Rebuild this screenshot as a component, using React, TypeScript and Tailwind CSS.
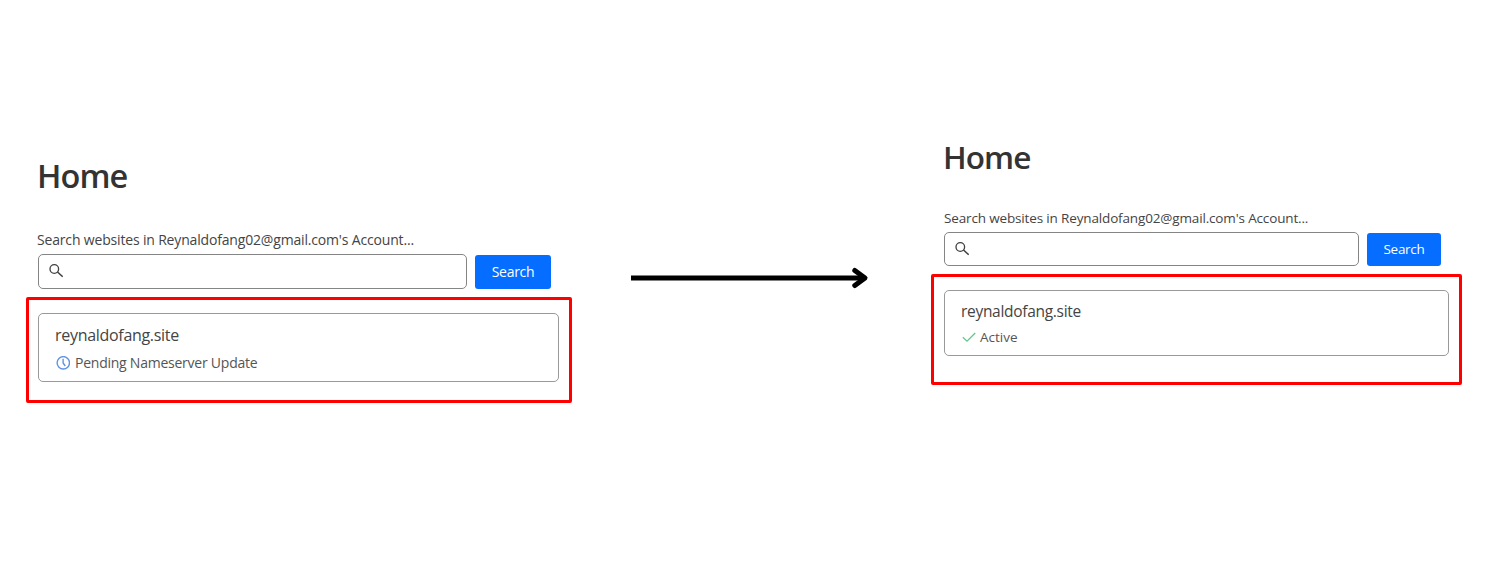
import type { ReactNode } from "react";

type PanelStyle = {
  root: string;
  title: string;
  label: string;
  searchRow: string;
  input: string;
  button: string;
  highlight: string;
  card: string;
  site: string;
  status: string;
};

const before: PanelStyle = {
  root: "w-[546px] pt-[156px]",
  title: "ml-[11px] text-[32.5px] leading-[40px] tracking-[-0.9px]",
  label: "ml-[11px] mt-[34px] text-[14px] tracking-[-0.17px]",
  searchRow: "ml-[12px] mt-[4px] h-[35px] gap-[8px]",
  input: "h-[35px] w-[429px] pb-px pl-[10px]",
  button: "h-[34px] w-[76px] pb-[2px] text-[14px] tracking-[-0.3px]",
  highlight: "mt-[8px] h-[106px] pt-[13px] pl-[9px]",
  card: "h-[69px] w-[521px] pt-[9px] pl-[16px]",
  site: "text-[16px] tracking-[-0.3px]",
  status: "mt-[6px] gap-[5px] text-[14px] tracking-[-0.24px]",
};

const after: PanelStyle = {
  root: "w-[531px] pt-[137px]",
  title: "ml-[12px] text-[31.5px] leading-[40px] tracking-[-0.9px]",
  label: "ml-[13px] mt-[31px] text-[13.5px] tracking-[-0.15px]",
  searchRow: "ml-[13px] mt-[4px] h-[34px] gap-[8px]",
  input: "h-[34px] w-[415px] pl-[10px]",
  button: "h-[33px] w-[74px] text-[13.5px] tracking-[-0.3px]",
  highlight: "mt-[8px] h-[111px] pt-[13px] pl-[10px]",
  card: "h-[66px] w-[505px] pt-[8px] pl-[16px]",
  site: "text-[15.5px] tracking-[-0.3px]",
  status: "mt-[4px] gap-[4px] text-[13.5px] tracking-[0px]",
};

function SearchIcon() {
  return (
    <svg className="h-[14px] w-[14px] shrink-0" viewBox="0 0 14 14" fill="none" stroke="#404040" strokeWidth="1.3">
      <circle cx="5.3" cy="5" r="4.3" />
      <path d="M8.5 8 L13.7 12.8" strokeWidth="1.5" />
    </svg>
  );
}

function ClockIcon() {
  return (
    <svg className="ml-px h-[14px] w-[14px] shrink-0" viewBox="0 0 14 14" fill="none" stroke="#5f93e3" strokeWidth="1.4">
      <circle cx="7.3" cy="6.8" r="6.2" />
      <path d="M7.1 2.8 V7 L9.3 10" />
    </svg>
  );
}

function CheckIcon() {
  return (
    <svg className="ml-px h-[14px] w-[14px] shrink-0" viewBox="0 0 14 14" fill="none" stroke="#63c88a" strokeWidth="1.3">
      <path d="M0.8 7.2 L5 11.2 L13.2 3" />
    </svg>
  );
}

function Panel({ s, icon, status }: { s: PanelStyle; icon: ReactNode; status: string }) {
  return (
    <section className={`shrink-0 ${s.root}`}>
      <h1 className={`font-semibold whitespace-nowrap text-[#333333] ${s.title}`}>Home</h1>
      <p className={`leading-[20px] whitespace-nowrap text-[#444444] ${s.label}`}>
        Search websites in Reynaldofang02@gmail.com's Account...
      </p>
      <div className={`flex items-start ${s.searchRow}`}>
        <div className={`flex shrink-0 items-center rounded-[5px] border border-[#858585] ${s.input}`}>
          <SearchIcon />
        </div>
        <button className={`mt-px shrink-0 rounded-[3px] bg-[#056dff] text-center text-white ${s.button}`}>
          Search
        </button>
      </div>
      <div className={`rounded-[2px] border-[3px] border-[#ff0000] ${s.highlight}`}>
        <div className={`rounded-[5px] border border-[#999999] ${s.card}`}>
          <div className={`leading-[24px] whitespace-nowrap text-[#444444] ${s.site}`}>reynaldofang.site</div>
          <div className={`flex items-center leading-[20px] whitespace-nowrap text-[#555555] ${s.status}`}>
            {icon}
            <span>{status}</span>
          </div>
        </div>
      </div>
    </section>
  );
}

export default function App() {
  return (
    <main className="flex h-[575px] w-[1510px] items-start overflow-hidden bg-white pl-[26px] font-['Open_Sans','Noto_Sans',sans-serif]">
      <Panel s={before} icon={<ClockIcon />} status="Pending Nameserver Update" />
      <svg className="mt-[266px] ml-[58px] h-[24px] w-[240px] shrink-0" viewBox="0 0 240 24" fill="none" stroke="#000000" strokeWidth="5">
        <path d="M1 12 H235" />
        <path d="M224.8 4.4 L235 12 L224.8 19.6" strokeLinecap="round" strokeLinejoin="round" />
      </svg>
      <div className="ml-[61px]">
        <Panel s={after} icon={<CheckIcon />} status="Active" />
      </div>
    </main>
  );
}
